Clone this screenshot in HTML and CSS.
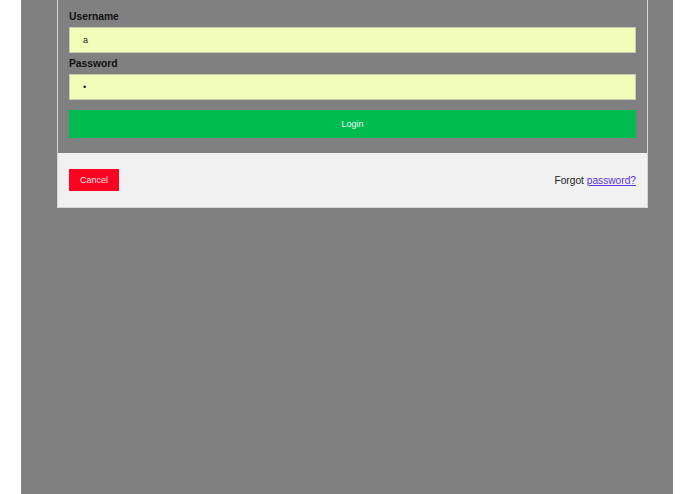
FILE: index.html
```html
<!DOCTYPE html>
<html>
<head>
<meta charset="utf-8">
<link rel="stylesheet" href="styles.css">
</head>
<body>
<div class="overlay">
  <div class="modal">
    <form class="form-area">
      <label class="lbl">Username</label>
      <input class="field" type="text" value="a">
      <label class="lbl">Password</label>
      <input class="field" type="password" value="a">
      <button class="login" type="button">Login</button>
    </form>
    <div class="footer">
      <button class="cancel" type="button">Cancel</button>
      <span class="forgot">Forgot <a href="#">password?</a></span>
    </div>
  </div>
</div>
</body>
</html>
```
FILE: styles.css
```css
html, body {
  margin: 0;
  padding: 0;
  background: #ffffff;
  font-family: "Liberation Sans", Arial, sans-serif;
}
.overlay {
  margin-left: 21px;
  width: 652px;
  height: 494px;
  background: #808080;
  overflow: hidden;
}
.modal {
  margin-left: 36px;
  width: 589px;
  border: 1px solid #d6d6d6;
  border-top: none;
  background: #f1f1f1;
}
.form-area {
  display: flex;
  flex-direction: column;
  padding: 10px 11px 15px;
  background: #808080;
  margin: 0;
}
.lbl {
  font-size: 10.3px;
  font-weight: bold;
  line-height: 13px;
  color: #111;
}
.field {
  box-sizing: border-box;
  height: 26px;
  margin: 4px 0 4px;
  border: 1px solid #c9c9b4;
  background: #f1fdb8;
  padding: 0 13px;
  font-family: "Liberation Sans", Arial, sans-serif;
  font-size: 9px;
  color: #222;
  outline: none;
}
.login {
  height: 28px;
  margin-top: 6px;
  border: none;
  background: #00bb50;
  color: #e8f8ee;
  font-family: "Liberation Sans", Arial, sans-serif;
  font-size: 9px;
  cursor: pointer;
}
.footer {
  display: flex;
  justify-content: space-between;
  align-items: center;
  padding: 15px 11px 16px;
  margin-top: 1px;
  background: #f1f1f1;
}
.cancel {
  width: 50px;
  height: 22px;
  border: none;
  background: #ff0020;
  color: #ffe6e8;
  font-family: "Liberation Sans", Arial, sans-serif;
  font-size: 9px;
  padding: 0;
}
.forgot {
  font-size: 10.2px;
  line-height: 13px;
  color: #222;
}
.forgot a {
  color: #5b35d6;
}
```
